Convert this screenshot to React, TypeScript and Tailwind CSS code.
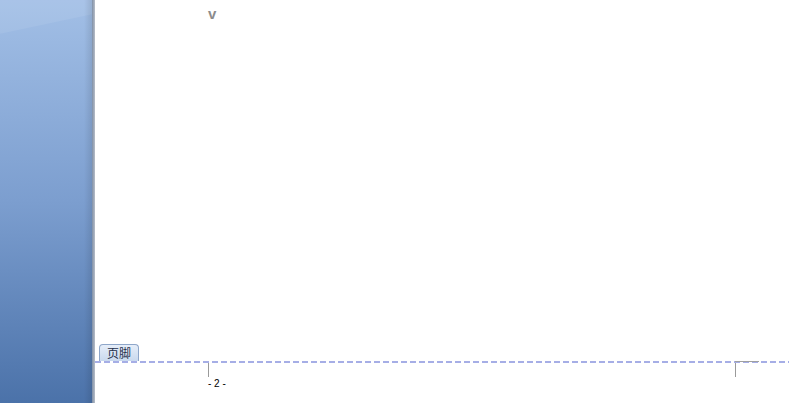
import * as React from "react";

const App: React.FC = () => {
  return (
    <div
      className="flex h-[403px] w-[789px] overflow-hidden bg-white"
      style={{ fontFamily: '"Liberation Sans", "Noto Sans CJK SC", sans-serif' }}
    >
      {/* side panel */}
      <div className="relative w-[92px] flex-shrink-0 overflow-hidden bg-gradient-to-b from-[#a2bfe6] via-[#7c9ecf] to-[#4b72a9]">
        <div className="absolute -left-[20px] -top-[46px] h-[62px] w-[200px] -rotate-[12deg] bg-white/[0.07]" />
        <div className="absolute right-0 top-0 h-full w-[8px] bg-gradient-to-r from-transparent to-[#000]/10" />
      </div>
      <div className="w-[3px] flex-shrink-0 bg-gradient-to-r from-[#7f8fa6] to-[#b8bec8]" />

      {/* page */}
      <div className="flex flex-1 flex-col">
        <div className="pl-[113px] pt-[5px] text-[15px] font-bold leading-[18px] text-[#8c8c8c]">
          v
        </div>
        <div className="flex-1" />

        {/* footer */}
        <div className="flex flex-col">
          <div className="pl-[4px]">
            <div className="flex h-[17px] w-[40px] items-center justify-center rounded-t-[4px] border border-b-0 border-[#8ea6c9] bg-gradient-to-b from-[#e6eef9] to-[#c9d9ee] pt-[1px] text-[12px] leading-none text-[#1f2f4a]">
              页脚
            </div>
          </div>
          <div className="relative h-[2px]">
            <div className="absolute inset-0 bg-[repeating-linear-gradient(to_right,#a6aee6_0px,#a6aee6_6px,transparent_6px,transparent_9px)]" />
            <div className="absolute left-[640px] top-0 h-[1px] w-[24px] bg-[#a0a0a0]" />
          </div>
          <div className="flex h-[40px]">
            <div className="w-[113px] flex-shrink-0" />
            <div className="relative w-[1px] flex-shrink-0">
              <div className="h-[14px] w-[1px] bg-[#9a9a9a]" />
              <div className="absolute left-0 top-[15px] whitespace-nowrap text-[10px] leading-[12px] text-black">- 2 -</div>
            </div>
            <div className="w-[526px] flex-shrink-0" />
            <div className="h-[14px] w-[1px] bg-[#9a9a9a]" />
          </div>
        </div>
      </div>
    </div>
  );
};

export default App;
